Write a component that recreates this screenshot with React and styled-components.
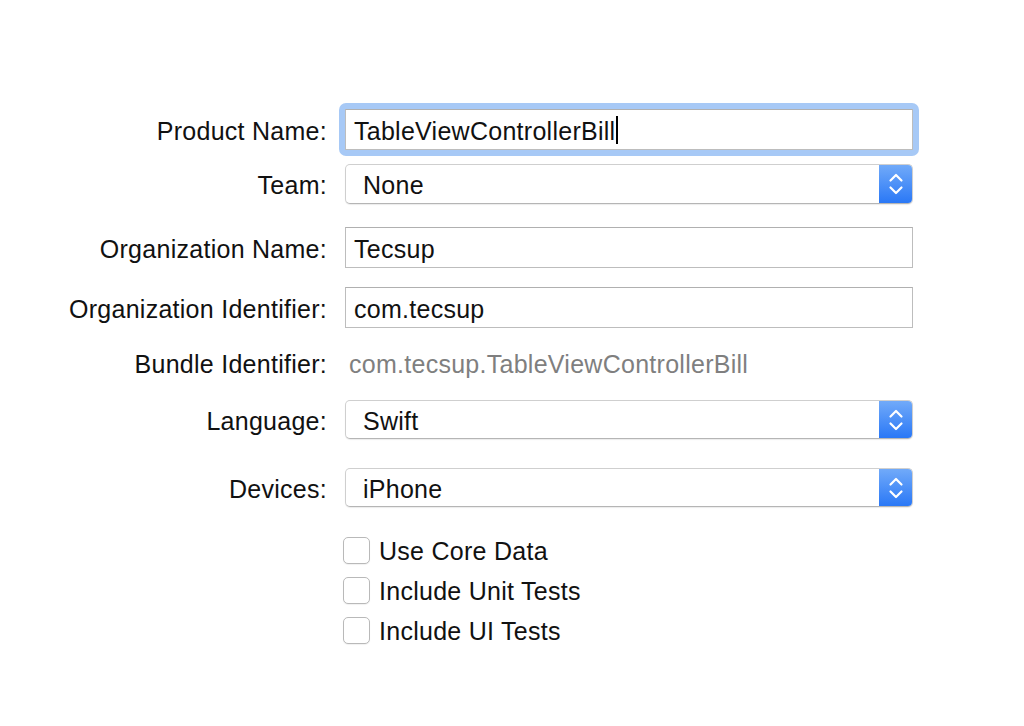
import styled, { createGlobalStyle } from "styled-components";

const GlobalStyle = createGlobalStyle`
  html, body {
    margin: 0;
    background: #ffffff;
  }
  body {
    font-family: "Liberation Sans", Arial, sans-serif;
    letter-spacing: 0.27px;
    color: #1b1b1b;
  }
`;

const Form = styled.div`
  padding-top: 109px;
  width: 1024px;
  height: 726px;
  box-sizing: border-box;
`;

const Row = styled.div`
  display: flex;
  align-items: center;
  height: ${(p) => p.$h || 41}px;
  margin-top: ${(p) => p.$gap || 0}px;
`;

const Label = styled.div`
  width: 327px;
  text-align: right;
  font-size: 25px;
  color: #111;
  padding-top: 3px;
`;

const Field = styled.div`
  margin-left: 18px;
  width: 568px;
  height: 100%;
  display: flex;
`;

const Ring = styled.div`
  flex: 1;
  display: flex;
  margin: -6px;
  padding: 6px;
  border-radius: 7px;
  background: #a7c9f6;
`;

const TextBox = styled.div`
  flex: 1;
  display: flex;
  align-items: center;
  box-sizing: border-box;
  background: #fff;
  border: 1px solid #bdbdbd;
  border-top-color: #b0b0b0;
  padding: 3px 0 0 8px;
  font-size: 25px;
  color: #111;
`;

const Caret = styled.span`
  display: inline-block;
  width: 2px;
  height: 28px;
  margin: -3px 0 0 1px;
  background: #000;
`;

const Popup = styled.div`
  flex: 1;
  display: flex;
  box-sizing: border-box;
  border: 1px solid #cfcfcf;
  border-bottom-color: #b5b5b5;
  border-radius: 5px;
  box-shadow: 0 1px 1px rgba(0, 0, 0, 0.08);
  background: #fff;
  overflow: hidden;
`;

const PopupText = styled.div`
  flex: 1;
  display: flex;
  align-items: center;
  padding: 3px 0 0 17px;
  font-size: 25px;
  color: #111;
`;

const Stepper = styled.div`
  width: 33px;
  display: flex;
  align-items: center;
  justify-content: center;
  background: linear-gradient(#71aaf9, #2a78f6);
`;

const Value = styled.div`
  padding: 2px 0 0 4px;
  display: flex;
  align-items: center;
  font-size: 25px;
  color: #7f7f7f;
`;

const Checks = styled.div`
  margin-top: 23px;
  padding-left: 343px;
  display: flex;
  flex-direction: column;
`;

const CheckRow = styled.label`
  display: flex;
  align-items: center;
  height: 40px;
  font-size: 25px;
  color: #111;
`;

const CheckText = styled.span`
  padding-top: 2px;
`;

const Box = styled.span`
  width: 27px;
  height: 27px;
  box-sizing: border-box;
  border: 1px solid #b9b9b9;
  border-radius: 5px;
  background: #fff;
  margin-right: 9px;
  box-shadow: 0 1px 1px rgba(0, 0, 0, 0.06);
`;

function Chevrons() {
  return (
    <svg width="18" height="28" viewBox="0 0 18 28" fill="none">
      <path d="M3.5 10.5 L9 5 L14.5 10.5" stroke="#fff" strokeWidth="2.2" strokeLinecap="round" strokeLinejoin="round" />
      <path d="M3.5 17.5 L9 23 L14.5 17.5" stroke="#fff" strokeWidth="2.2" strokeLinecap="round" strokeLinejoin="round" />
    </svg>
  );
}

function Select({ value }) {
  return (
    <Popup>
      <PopupText>{value}</PopupText>
      <Stepper>
        <Chevrons />
      </Stepper>
    </Popup>
  );
}

function Check({ children }) {
  return (
    <CheckRow>
      <Box />
      <CheckText>{children}</CheckText>
    </CheckRow>
  );
}

export default function App() {
  return (
    <>
      <GlobalStyle />
      <Form>
        <Row $h={41}>
          <Label>Product Name:</Label>
          <Field>
            <Ring>
              <TextBox>
                TableViewControllerBill
                <Caret />
              </TextBox>
            </Ring>
          </Field>
        </Row>
        <Row $h={40} $gap={14}>
          <Label>Team:</Label>
          <Field>
            <Select value="None" />
          </Field>
        </Row>
        <Row $h={41} $gap={23}>
          <Label>Organization Name:</Label>
          <Field>
            <TextBox>Tecsup</TextBox>
          </Field>
        </Row>
        <Row $h={41} $gap={19}>
          <Label>Organization Identifier:</Label>
          <Field>
            <TextBox>com.tecsup</TextBox>
          </Field>
        </Row>
        <Row $h={30} $gap={20}>
          <Label>Bundle Identifier:</Label>
          <Field>
            <Value>com.tecsup.TableViewControllerBill</Value>
          </Field>
        </Row>
        <Row $h={39} $gap={22}>
          <Label>Language:</Label>
          <Field>
            <Select value="Swift" />
          </Field>
        </Row>
        <Row $h={39} $gap={29}>
          <Label>Devices:</Label>
          <Field>
            <Select value="iPhone" />
          </Field>
        </Row>
        <Checks>
          <Check>Use Core Data</Check>
          <Check>Include Unit Tests</Check>
          <Check>Include UI Tests</Check>
        </Checks>
      </Form>
    </>
  );
}
